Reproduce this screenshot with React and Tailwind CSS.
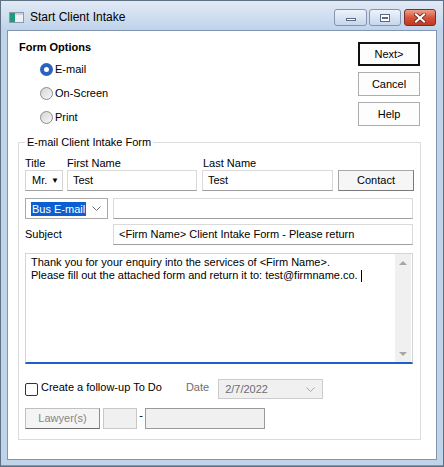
import React from 'react';

const Chevron = ({ color = '#6b6b6b' }) => (
    <svg width="9" height="5" viewBox="0 0 9 5" className="block">
        <path d="M0.5 0.5 L4.5 4.5 L8.5 0.5" stroke={color} strokeWidth="1" fill="none" />
    </svg>
);

const Radio = ({ checked, label }) => (
    <div className="flex items-center h-[24px]">
        {checked ? (
            <span className="w-[13px] h-[13px] rounded-full border-[4px] border-[#2a62bd] bg-white" />
        ) : (
            <span className="w-[13px] h-[13px] rounded-full border border-[#8c8c8c] bg-gradient-to-br from-[#d4d4d4] to-[#f8f8f8]" />
        )}
        <span className="ml-[2px]">{label}</span>
    </div>
);

const SideButton = ({ label, primary }) => (
    <button
        className={`w-[62px] h-[24px] flex items-center justify-center bg-[#fdfdfd] ${primary ? 'border-2 border-[#111]' : 'border border-[#adadad]'}`}
    >
        {label}
    </button>
);

const TextBox = ({ value, className = '' }) => (
    <div className={`h-[21px] flex items-center pl-[5px] bg-white border border-[#dadada] border-b-[#9f9f9f] ${className}`}>
        {value}
    </div>
);

export default function App() {
    return (
        <div className="w-[444px] h-[467px] flex flex-col bg-[#bfd3eb] border border-[#5f7185] text-[11px] leading-[13px] text-black font-['Liberation_Sans',Arial,sans-serif]">
            {/* Title bar */}
            <div className="h-[29px] flex items-start bg-gradient-to-b from-[#e2eaf5] to-[#bfd3eb] pl-[8px] pr-[7px]">
                <svg width="15" height="11" viewBox="0 0 15 11" className="mt-[11px] shrink-0">
                    <rect x="0.5" y="0.5" width="14" height="10" fill="#eef1f3" stroke="#8a9aa8" />
                    <rect x="1" y="1" width="5" height="9" fill="#1f9a7a" />
                    <rect x="6" y="1" width="8" height="2" fill="#c9d3db" />
                </svg>
                <span className="ml-[6px] mt-[9px] text-[12px] leading-[15px] text-black">Start Client Intake</span>
                <div className="ml-auto mt-[8px] flex">
                    <div className="w-[33px] h-[17px] rounded-[3px] border border-[#8195b1] bg-gradient-to-b from-[#eef3fa] to-[#c6d6ec] flex items-end justify-center pb-[4px]">
                        <span className="w-[10px] h-[3px] bg-white border border-[#5a6a80]" />
                    </div>
                    <div className="ml-[2px] w-[32px] h-[17px] rounded-[3px] border border-[#8195b1] bg-gradient-to-b from-[#eef3fa] to-[#c6d6ec] flex items-center justify-center">
                        <span className="w-[10px] h-[8px] bg-white border border-[#5a6a80] flex items-center justify-center">
                            <span className="w-[6px] h-[2px] border-t-[2px] border-[#5a6a80]" />
                        </span>
                    </div>
                    <div className="ml-[3px] w-[32px] h-[17px] rounded-[3px] border border-[#7a2f22] bg-gradient-to-b from-[#eba08b] via-[#d5543c] to-[#c4361e] flex items-center justify-center">
                        <svg width="12" height="10" viewBox="0 0 12 10">
                            <path d="M2 1.5 L10 8.5 M10 1.5 L2 8.5" stroke="#5b1c12" strokeWidth="3.6" strokeLinecap="square" />
                            <path d="M2 1.5 L10 8.5 M10 1.5 L2 8.5" stroke="#fff" strokeWidth="2.2" strokeLinecap="square" />
                        </svg>
                    </div>
                </div>
            </div>

            {/* Client area */}
            <div className="ml-[6px] w-[430px] h-[430px] bg-white border border-[#8296b0] pt-[10px]">
                {/* Form options + buttons */}
                <div className="h-[95px] flex justify-between">
                    <div className="pl-[11px]">
                        <div className="font-bold">Form Options</div>
                        <div className="pl-[21px] pt-[3px]">
                            <Radio checked label="E-mail" />
                            <Radio label="On-Screen" />
                            <Radio label="Print" />
                        </div>
                    </div>
                    <div className="pr-[16px] pt-[1px] flex flex-col gap-[6px]">
                        <SideButton label="Next>" primary />
                        <SideButton label="Cancel" />
                        <SideButton label="Help" />
                    </div>
                </div>

                {/* Intake form group */}
                <fieldset className="ml-[10px] w-[401px] h-[304px] border border-[#dcdcdc] px-[6px]">
                    <legend className="px-[2px] leading-[13px]">E-mail Client Intake Form</legend>

                    <div className="pt-[8px] flex">
                        <div className="w-[38px] flex flex-col">
                            <span className="h-[13px]">Title</span>
                            <div className="h-[21px] flex items-center justify-between pl-[6px] pr-[3px] bg-white border border-[#d6d6d6] border-b-[#a0a0a0]">
                                <span>Mr.</span>
                                <span className="text-[8px] leading-[8px]">▼</span>
                            </div>
                        </div>
                        <div className="ml-[4px] w-[130px] flex flex-col">
                            <span className="h-[13px]">First Name</span>
                            <TextBox value="Test" />
                        </div>
                        <div className="ml-[5px] w-[131px] flex flex-col">
                            <span className="h-[13px] pl-[1px]">Last Name</span>
                            <TextBox value="Test" />
                        </div>
                        <div className="ml-[5px] w-[76px] flex flex-col justify-end">
                            <button className="h-[21px] flex items-center justify-center bg-[#f6f6f6] border border-[#a9a9a9] border-b-[#7a7a7a] border-r-[#7a7a7a]">
                                Contact
                            </button>
                        </div>
                    </div>

                    <div className="mt-[7px] flex">
                        <div className="w-[83px] h-[21px] flex items-center justify-between pl-[5px] pr-[6px] bg-white border border-[#a9a9a9]">
                            <span className="bg-[#0b5fd0] text-white px-[1px] leading-[14px]">Bus E-mail</span>
                            <Chevron />
                        </div>
                        <TextBox value="" className="ml-[5px] w-[300px]" />
                    </div>

                    <div className="mt-[5px] flex items-center">
                        <span className="w-[88px]">Subject</span>
                        <TextBox value="<Firm Name> Client Intake Form - Please return" className="w-[300px]" />
                    </div>

                    <div className="mt-[8px] w-[388px] h-[111px] flex border border-[#d4d4d4] border-b-2 border-b-[#1f5fcc]">
                        <div className="flex-1 pl-[5px] pt-[2px]">
                            <div>Thank you for your enquiry into the services of &lt;Firm Name&gt;.</div>
                            <div className="flex items-center">
                                Please fill out the attached form and return it to: test@firmname.co.&nbsp;
                                <span className="inline-block w-[1px] h-[12px] bg-black" />
                            </div>
                        </div>
                        <div className="w-[16px] bg-[#f0f0f0] flex flex-col items-center justify-between pt-[7px] pb-[6px] mr-[1px]">
                            <span className="w-0 h-0 border-l-[4px] border-r-[4px] border-b-[4px] border-l-transparent border-r-transparent border-b-[#a6a6a6]" />
                            <span className="w-0 h-0 border-l-[4px] border-r-[4px] border-t-[4px] border-l-transparent border-r-transparent border-t-[#a6a6a6]" />
                        </div>
                    </div>

                    <div className="mt-[15px] h-[20px] flex items-center">
                        <span className="w-[13px] h-[13px] rounded-[2px] border border-[#333] bg-white" />
                        <span className="ml-[3px] -mt-[3px]">Create a follow-up To Do</span>
                        <span className="ml-[24px] -mt-[4px] text-[#6d6d6d]">Date</span>
                        <div className="ml-[9px] w-[105px] h-[20px] flex items-center justify-between pl-[6px] pr-[7px] bg-[#f0f0f0] border border-[#cccccc] text-[#6d6d6d]">
                            <span>2/7/2022</span>
                            <Chevron color="#a8a8a8" />
                        </div>
                    </div>

                    <div className="mt-[9px] h-[21px] flex items-center">
                        <button className="w-[75px] h-[21px] flex items-center justify-center bg-[#f4f4f4] border border-[#c0c0c0] border-b-[#6d6d6d] border-r-[#8c8c8c] text-[#858585]">
                            Lawyer(s)
                        </button>
                        <div className="ml-[3px] w-[34px] h-[21px] bg-[#f0f0f0] border border-[#c8c8c8]" />
                        <span className="w-[8px] text-center -mt-[6px]">-</span>
                        <div className="w-[120px] h-[21px] bg-[#f0f0f0] border border-[#9a9a9a]" />
                    </div>
                </fieldset>
            </div>
            <div className="flex-1" />
            <div className="h-[1px] bg-[#4aa9e0]" />
        </div>
    );
}
